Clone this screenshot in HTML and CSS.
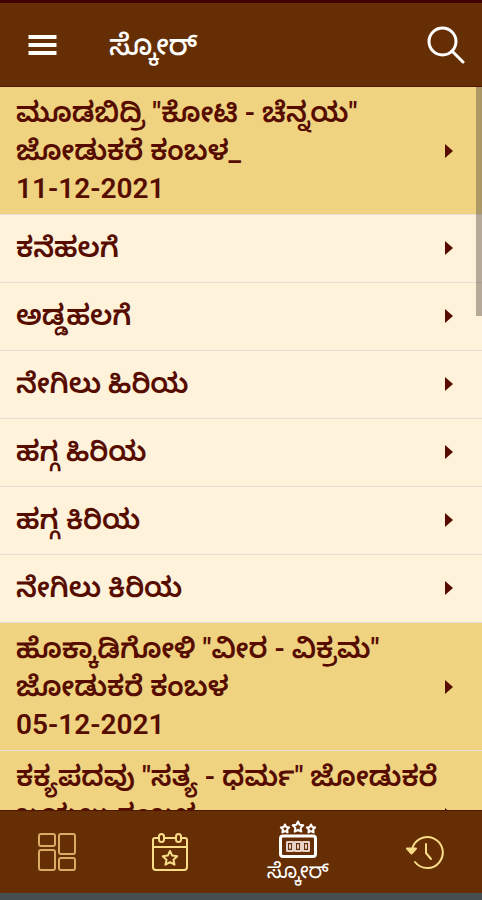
FILE: index.html
```html
<!DOCTYPE html>
<html lang="kn">
<head>
<meta charset="utf-8">
<meta name="viewport" content="width=device-width, initial-scale=1">
<title>ಸ್ಕೋರ್</title>
<link rel="stylesheet" href="styles.css">
</head>
<body>
<div class="app">
  <header class="topbar">
    <button class="icon-button" type="button" aria-label="Menu">
      <svg class="menu-icon" viewBox="0 0 28 22" aria-hidden="true"><path d="M0 3h28M0 11h28M0 19h28"/></svg>
    </button>
    <h1 class="title">ಸ್ಕೋರ್</h1>
    <button class="icon-button" type="button" aria-label="Search">
      <svg class="search-icon" viewBox="0 0 38 38" aria-hidden="true"><circle cx="15.5" cy="15.5" r="13.5"/><path d="M25 25l11 11"/></svg>
    </button>
  </header>

  <main class="content">
    <div class="list">
      <a class="row event" href="#e1"><span class="label">ಮೂಡಬಿದ್ರಿ "ಕೋಟಿ - ಚೆನ್ನಯ"<br>ಜೋಡುಕರೆ ಕಂಬಳ_<br>11-12-2021</span></a>
      <a class="row" href="#c1"><span class="label">ಕನೆಹಲಗೆ</span></a>
      <a class="row" href="#c2"><span class="label">ಅಡ್ಡಹಲಗೆ</span></a>
      <a class="row" href="#c3"><span class="label">ನೇಗಿಲು ಹಿರಿಯ</span></a>
      <a class="row" href="#c4"><span class="label">ಹಗ್ಗ ಹಿರಿಯ</span></a>
      <a class="row" href="#c5"><span class="label">ಹಗ್ಗ ಕಿರಿಯ</span></a>
      <a class="row" href="#c6"><span class="label">ನೇಗಿಲು ಕಿರಿಯ</span></a>
      <a class="row event" href="#e2"><span class="label">ಹೊಕ್ಕಾಡಿಗೋಳಿ "ವೀರ - ವಿಕ್ರಮ"<br>ಜೋಡುಕರೆ ಕಂಬಳ<br>05-12-2021</span></a>
      <a class="row event" href="#e3"><span class="label">ಕಕ್ಯಪದವು "ಸತ್ಯ - ಧರ್ಮ" ಜೋಡುಕರೆ<br>ಬಯಲು ಕಂಬಳ</span></a>
    </div>
    <div class="scroll-thumb"></div>
  </main>

  <nav class="tabs">
    <a class="tab" href="#home" aria-label="Dashboard">
      <svg class="tab-icon" viewBox="0 0 38 38" aria-hidden="true"><rect x="1" y="1" width="16" height="12" rx="2"/><rect x="1" y="17" width="16" height="20" rx="2"/><rect x="21" y="1" width="16" height="20" rx="2"/><rect x="21" y="25" width="16" height="12" rx="2"/></svg>
    </a>
    <a class="tab" href="#calendar" aria-label="Events">
      <svg class="tab-icon bright" viewBox="0 0 38 38" aria-hidden="true"><path d="M7 5H4a2 2 0 0 0-2 2v27a3 3 0 0 0 3 3h28a3 3 0 0 0 3-3V7a2 2 0 0 0-2-2h-3M14 5h10M2 14h34"/><rect x="8" y="1" width="5" height="8" rx="2.5"/><rect x="25" y="1" width="5" height="8" rx="2.5"/><path d="M19 18l2.200 4.600 5 .6-3.700 3.500 1 5-4.500-2.500-4.500 2.500 1-5-3.700-3.500 5-.6z"/></svg>
    </a>
    <a class="tab active" href="#score" aria-current="page">
      <svg class="tab-icon" viewBox="0 0 38 38" aria-hidden="true"><path d="M19 1.500l1.600 3.300 3.700.5-2.700 2.600.7 3.700-3.300-1.800-3.300 1.800.7-3.700-2.700-2.600 3.700-.5z"/><path d="M6 4.500l1.300 2.500 2.900.4-2.100 2.100.5 2.900L6 11.100l-2.600 1.300.5-2.900-2.100-2.100L4.700 7z"/><path d="M32 4.500l1.300 2.500 2.900.4-2.100 2.100.5 2.900-2.600-1.300-2.600 1.300.5-2.900-2.100-2.100 2.900-.4z"/><rect class="frame" x="1.500" y="16" width="35" height="20.500" rx="2.500"/><g class="digits"><rect x="8" y="22" width="6" height="9"/><rect x="16" y="22" width="6" height="9"/><rect x="24" y="22" width="6" height="9"/><path d="M11 25v3M19 25v3M27 25v3"/></g></svg>
      <span class="tab-label">ಸ್ಕೋರ್</span>
    </a>
    <a class="tab" href="#history" aria-label="History">
      <svg class="tab-icon bright" viewBox="0 0 38 38" aria-hidden="true"><path d="M6 17A15.500 15.500 0 1 1 9 29"/><path class="solid" d="M1 15.500h9l-4.500 5z"/><path d="M20 11v9l5 6"/></svg>
    </a>
  </nav>
</div>
</body>
</html>
```

FILE: styles.css
```css
* { box-sizing: border-box; }

body {
  margin: 0;
  font-family: Roboto, "Noto Sans Kannada", "Noto Sans", sans-serif;
}

.app {
  display: flex;
  flex-direction: column;
  height: 100vh;
  background: #662e04;
  border-top: 3px solid #400000;
  border-bottom: 7px solid #464e51;
}

.topbar {
  display: flex;
  align-items: center;
  height: 84px;
  padding: 0 17px 0 28px;
  border-bottom: 1px solid #501400;
  color: #fff;
}

.icon-button {
  display: flex;
  padding: 0;
  border: 0;
  background: none;
  color: inherit;
}

.icon-button svg,
.tab-icon {
  fill: none;
  stroke: currentColor;
}

.menu-icon { width: 29px; height: 22px; stroke-width: 4; }
.search-icon { width: 38px; height: 38px; stroke-width: 3; stroke-linecap: round; }

.title {
  flex: 1;
  margin: 0;
  padding-left: 52px;
  font-size: 29px;
  font-weight: 500;
  line-height: 40px;
}

.content {
  position: relative;
  flex: 1;
  min-height: 0;
  background: #fff2da;
}

.list {
  height: 100%;
  overflow-x: hidden;
  overflow-y: auto;
  scrollbar-width: none;
}

.scroll-thumb {
  position: absolute;
  top: 0;
  right: 0;
  width: 6px;
  height: 229px;
  background: rgba(90, 80, 70, 0.45);
}

.row {
  display: flex;
  align-items: center;
  padding: 14px 29px 15px 16px;
  border-bottom: 1px solid #e6ddd8;
  color: #560d00;
  text-decoration: none;
}

.row::after {
  content: "";
  border: solid transparent;
  border-width: 7px 0 7px 8px;
  border-left-color: #560d00;
}

.event {
  padding-top: 7px;
  padding-bottom: 6px;
  background: #efd380;
}

.label {
  flex: 1;
  min-width: 0;
  font-size: 28px;
  font-weight: 600;
  line-height: 38px;
  white-space: nowrap;
}

.event .label { min-height: 114px; }

.tabs {
  display: grid;
  grid-template-columns: 4fr 4fr 5fr 4fr;
  height: 83px;
  border-top: 1px solid #501400;
}

.tab {
  display: flex;
  flex-direction: column;
  align-items: center;
  justify-content: center;
  color: #d9ac66;
  text-decoration: none;
}

.tab.active { color: #fff; }

.tab-icon { width: 38px; height: 38px; stroke-width: 2; stroke-linejoin: round; stroke-linecap: round; }
.bright { color: #f8dc88; }
.solid { fill: currentColor; }
.frame { stroke-width: 3; }
.digits { stroke-width: 2; color: #e6d2c8; stroke: currentColor; }

.tab-label { font-size: 21px; line-height: 26px; }
```
